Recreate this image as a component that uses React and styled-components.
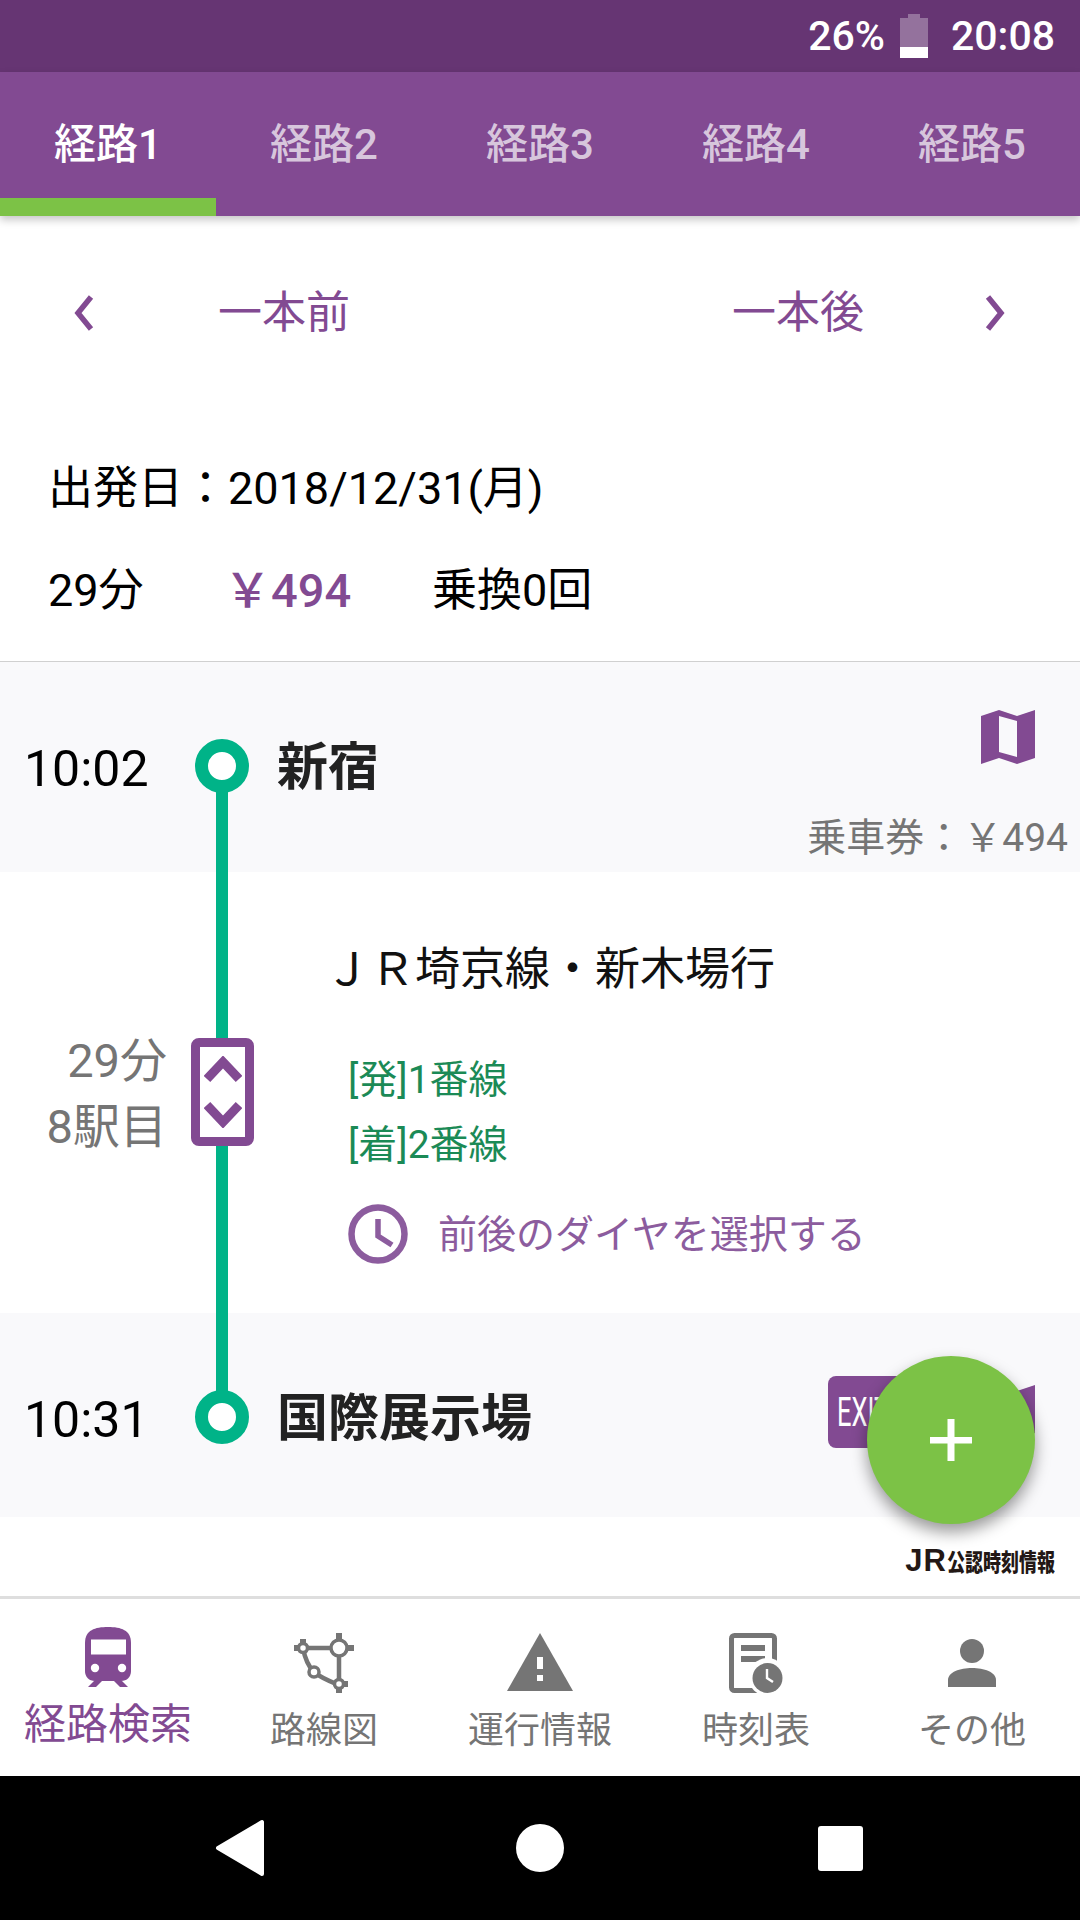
import React from 'react'
import styled, { createGlobalStyle } from 'styled-components'

const PURPLE = '#824a92'
const GREEN = '#7cc246'
const LINE = '#00b388'
const GREY = '#757575'

const GlobalStyle = createGlobalStyle`
  html, body {
    margin: 0;
    padding: 0;
    background: #fff;
  }
  body {
    font-family: Roboto, "Noto Sans CJK JP", sans-serif;
    font-size: 44px;
    color: #000;
  }
  * { box-sizing: border-box; }
`

const tabs = ['経路1', '経路2', '経路3', '経路4', '経路5']

function App() {
  return (
    <Screen>
      <GlobalStyle />
      <StatusBar>
        <StatusText>26%</StatusText>
        <Battery />
        <StatusText>20:08</StatusText>
      </StatusBar>

      <Tabs>
        {tabs.map((tab, index) => (
          <Tab key={tab} $active={index === 0}>{tab}</Tab>
        ))}
      </Tabs>

      <PagerRow>
        <PagerGroup>
          <Chevron viewBox="0 0 22 36">
            <path d="M19 2 L6 18 L19 34" />
          </Chevron>
          <PagerLabel>一本前</PagerLabel>
        </PagerGroup>
        <PagerGroup $right>
          <PagerLabel>一本後</PagerLabel>
          <Chevron viewBox="0 0 22 36">
            <path d="M3 2 L16 18 L3 34" />
          </Chevron>
        </PagerGroup>
      </PagerRow>

      <Summary>
        <SummaryLine>出発日：2018/12/31(月)</SummaryLine>
        <SummaryLine>
          <SummaryTime>29分</SummaryTime>
          <SummaryPrice>￥494</SummaryPrice>
          <span>乗換0回</span>
        </SummaryLine>
      </Summary>

      <Route>
        <RouteLine />

        <StationRow $height={210}>
          <StationMain>
            <StationTime>10:02</StationTime>
            <StationNode />
            <StationName>新宿</StationName>
          </StationMain>
          <StationSide>
            <MapIcon />
            <Fare>乗車券：￥494</Fare>
          </StationSide>
        </StationRow>

        <Segment>
          <Ride>
            <RideLine>29分</RideLine>
            <RideLine>8駅目</RideLine>
          </Ride>
          <ExpandBadge>
            <svg width="38" height="72" viewBox="0 0 38 72" fill="none" stroke={PURPLE} strokeWidth="9">
              <path d="M3 23 L19 6 L35 23" />
              <path d="M3 49 L19 66 L35 49" />
            </svg>
          </ExpandBadge>
          <SegmentBody>
            <LineTitle>ＪＲ埼京線・新木場行</LineTitle>
            <Platforms>
              <Platform>[発]1番線</Platform>
              <Platform>[着]2番線</Platform>
            </Platforms>
            <DiagramLink>
              <svg width="60" height="60" viewBox="0 0 60 60" fill="none" stroke="#8c5c9e" strokeWidth="6.5">
                <circle cx="30" cy="30" r="26.5" />
                <path d="M30 15 V32 L44 41" strokeWidth="5.5" />
              </svg>
              <span>前後のダイヤを選択する</span>
            </DiagramLink>
          </SegmentBody>
        </Segment>

        <StationRow $height={204}>
          <StationMain>
            <StationTime>10:31</StationTime>
            <StationNode />
            <StationName>国際展示場</StationName>
          </StationMain>
          <ExitGroup>
            <ExitButton><ExitText>EXIT</ExitText></ExitButton>
            <MapIcon />
          </ExitGroup>
        </StationRow>

        <Credit>
          <CreditJr>JR</CreditJr>
          <CreditText>公認時刻情報</CreditText>
        </Credit>
      </Route>

      <Fab>
        <svg width="42" height="42" viewBox="0 0 42 42" fill="#fff">
          <rect x="17.5" y="0" width="7" height="42" />
          <rect x="0" y="18" width="42" height="6.5" />
        </svg>
      </Fab>

      <BottomNav>
        <NavItem $active>
          <NavIcon>
            <svg width="46" height="60" viewBox="0 0 46 60" fill={PURPLE}>
              <path d="M0 16 C0 3 10 0 23 0 C36 0 46 3 46 16 V44 C46 50 42 54 36 54 H10 C4 54 0 50 0 44 Z" />
              <rect x="6" y="12.5" width="35" height="15" fill="#fff" />
              <circle cx="10" cy="41" r="4.2" fill="#fff" />
              <circle cx="37" cy="41" r="4.2" fill="#fff" />
              <polygon points="9,54 17,54 11,60 3,60" />
              <polygon points="29,54 37,54 43,60 35,60" />
            </svg>
          </NavIcon>
          <NavLabel $active>経路検索</NavLabel>
        </NavItem>
        <NavItem>
          <NavIcon>
            <svg width="60" height="60" viewBox="0 0 60 60" fill="none" stroke={GREY} strokeWidth="4.5">
              <path d="M9 15 H45 V52" />
              <path d="M9 15 C11 26 14 33 20 39 C27 45 35 48 45 52" />
              <path d="M0 15 H5 M9 6 V11 M45 0 V8 M53 15 H60 M45 52 V60 M49 51 H54" strokeWidth="6" />
              <circle cx="9" cy="15" r="4.5" fill="#fff" strokeWidth="3.5" />
              <circle cx="20" cy="39" r="5" fill="#fff" strokeWidth="3.5" />
              <circle cx="45" cy="15" r="8" fill="#fff" strokeWidth="3.5" />
              <circle cx="45" cy="51" r="4.5" fill="#fff" strokeWidth="3.5" />
            </svg>
          </NavIcon>
          <NavLabel>路線図</NavLabel>
        </NavItem>
        <NavItem>
          <NavIcon>
            <svg width="66" height="60" viewBox="0 0 66 60" fill={GREY}>
              <polygon points="33,0 66,58 0,58" />
              <rect x="30" y="24" width="6" height="12" fill="#fff" />
              <rect x="30" y="42" width="6" height="6" fill="#fff" />
            </svg>
          </NavIcon>
          <NavLabel>運行情報</NavLabel>
        </NavItem>
        <NavItem>
          <NavIcon>
            <svg width="54" height="60" viewBox="0 0 54 60" fill={GREY}>
              <rect x="2.5" y="2.5" width="43" height="55" rx="3" fill="#fff" stroke={GREY} strokeWidth="5" />
              <rect x="12" y="12" width="24" height="6" />
              <rect x="12" y="23" width="24" height="6" />
              <circle cx="38.5" cy="44" r="19" fill="#fff" />
              <circle cx="38.5" cy="45" r="15" />
              <path d="M38 36 V45 L44 49" fill="none" stroke="#fff" strokeWidth="2.4" />
            </svg>
          </NavIcon>
          <NavLabel>時刻表</NavLabel>
        </NavItem>
        <NavItem>
          <NavIcon>
            <svg width="48" height="60" viewBox="0 0 48 60" fill={GREY}>
              <circle cx="24" cy="18" r="12" />
              <path d="M0 54 V47 C0 39 12 35 24 35 C36 35 48 39 48 47 V54 Z" />
            </svg>
          </NavIcon>
          <NavLabel>その他</NavLabel>
        </NavItem>
      </BottomNav>

      <SystemBar>
        <svg width="50" height="58" viewBox="0 0 50 58" fill="#fff" stroke="#fff" strokeWidth="4" strokeLinejoin="round">
          <polygon points="3,29 47,3 47,55" />
        </svg>
        <HomeDot />
        <RecentSquare />
      </SystemBar>
    </Screen>
  )
}

function MapIcon() {
  return (
    <MapSvg viewBox="0 0 54 54">
      <path fillRule="evenodd" d="M0 6 L18 0 L36 6 L54 0 V48 L36 54 L18 48 L0 54 Z M18 6 V42 L36 47 V11 Z" />
    </MapSvg>
  )
}

export default App

const Screen = styled.div`
  position: relative;
  width: 1080px;
  height: 1920px;
  overflow: hidden;
  background: #fff;
`

const StatusBar = styled.div`
  height: 72px;
  background: #663573;
  display: flex;
  align-items: center;
  justify-content: flex-end;
  gap: 14px;
  padding-right: 25px;
`

const StatusText = styled.span`
  color: #fff;
  font-size: 41px;
  font-weight: 500;
  line-height: 72px;
  & + div + & {
    margin-left: 9px;
  }
`

const Battery = styled.div`
  position: relative;
  width: 28px;
  height: 40px;
  margin: 4px 0 0 1px;
  background: linear-gradient(to bottom, rgba(255, 255, 255, 0.3) 0 29px, #fff 29px);
  &::before {
    content: "";
    position: absolute;
    top: -4px;
    left: 8px;
    width: 12px;
    height: 4px;
    background: rgba(255, 255, 255, 0.3);
  }
`

const Tabs = styled.div`
  position: relative;
  z-index: 3;
  height: 144px;
  display: flex;
  background: ${PURPLE};
  box-shadow: 0 4px 8px rgba(0, 0, 0, 0.22);
`

const Tab = styled.div`
  position: relative;
  flex: 1;
  display: flex;
  align-items: center;
  justify-content: center;
  padding-bottom: 7px;
  font-size: 42px;
  font-weight: 500;
  color: ${props => props.$active ? '#fff' : 'rgba(255, 255, 255, 0.7)'};
  &::after {
    content: "";
    position: absolute;
    left: 0;
    right: 0;
    bottom: 0;
    height: 18px;
    background: ${props => props.$active ? GREEN : 'transparent'};
  }
`

const PagerRow = styled.div`
  height: 194px;
  display: flex;
  align-items: center;
  justify-content: space-between;
`

const PagerGroup = styled.div`
  display: flex;
  align-items: center;
  gap: ${props => props.$right ? '121px' : '124px'};
  padding: ${props => props.$right ? '0 73px 0 0' : '0 0 0 72px'};
`

const PagerLabel = styled.span`
  color: ${PURPLE};
  font-size: 44px;
  line-height: 60px;
`

const Chevron = styled.svg`
  width: 22px;
  height: 36px;
  fill: none;
  stroke: ${PURPLE};
  stroke-width: 5.5;
`

const Summary = styled.div`
  padding: 35px 0 0 48px;
  border-bottom: 1px solid #d0d0d0;
  height: 252px;
`

const SummaryLine = styled.div`
  display: flex;
  align-items: center;
  height: 78px;
  font-size: 45px;
  & + & {
    margin-top: 24px;
  }
`

const SummaryTime = styled.span`
  width: 176px;
`

const SummaryPrice = styled.span`
  width: 208px;
  color: ${PURPLE};
  font-size: 47px;
  font-weight: 500;
`

const Route = styled.div`
  position: relative;
`

const RouteLine = styled.div`
  position: absolute;
  z-index: 1;
  left: 216px;
  top: 104px;
  width: 12px;
  height: 651px;
  background: ${LINE};
`

const StationRow = styled.div`
  height: ${props => props.$height}px;
  background: #f9f9fb;
  display: flex;
  justify-content: space-between;
  align-items: flex-start;
`

const StationMain = styled.div`
  display: flex;
  align-items: center;
  height: 60px;
  margin-top: 74px;
`

const StationTime = styled.div`
  width: 195px;
  padding-left: 24px;
  margin-top: 5px;
  font-size: 50px;
  line-height: 60px;
`

const StationNode = styled.div`
  position: relative;
  z-index: 2;
  width: 54px;
  height: 54px;
  border-radius: 50%;
  border: 13px solid ${LINE};
  background: #fff;
`

const StationName = styled.div`
  margin: 4px 0 0 28px;
  font-size: 51px;
  font-weight: 700;
  color: #222;
  line-height: 60px;
`

const StationSide = styled.div`
  display: flex;
  flex-direction: column;
  align-items: flex-end;
  padding: 48px 12px 0 0;
`

const MapSvg = styled.svg`
  display: block;
  width: 54px;
  height: 54px;
  fill: ${PURPLE};
  ${StationSide} & {
    margin-right: 33px;
  }
`

const Fare = styled.div`
  margin-top: 50px;
  font-size: 39px;
  line-height: 48px;
  color: ${GREY};
`

const Segment = styled.div`
  height: 441px;
  display: flex;
  align-items: flex-start;
`

const Ride = styled.div`
  width: 167px;
  padding-top: 156px;
  text-align: right;
  color: ${GREY};
`

const RideLine = styled.div`
  font-size: 47px;
  line-height: 66px;
`

const ExpandBadge = styled.div`
  position: relative;
  z-index: 2;
  width: 63px;
  height: 108px;
  margin: 166px 0 0 24px;
  display: flex;
  align-items: center;
  justify-content: center;
  background: #fff;
  border: 9px solid ${PURPLE};
  border-radius: 8px;
`

const SegmentBody = styled.div`
  margin-left: 71px;
  padding-top: 68px;
`

const LineTitle = styled.div`
  font-size: 45px;
  line-height: 60px;
  color: #111;
`

const Platforms = styled.div`
  margin: 48px 0 0 23px;
`

const Platform = styled.div`
  font-size: 39px;
  line-height: 65px;
  color: #1b8a56;
`

const DiagramLink = styled.div`
  display: flex;
  align-items: center;
  gap: 30px;
  margin: 25px 0 0 23px;
  font-size: 39px;
  line-height: 60px;
  color: #8c5c9e;
  span {
    margin-top: 2px;
  }
`

const ExitGroup = styled.div`
  display: flex;
  align-items: flex-start;
  gap: 25px;
  padding: 63px 45px 0 0;
  ${MapSvg} {
    margin-top: 9px;
  }
`

const ExitButton = styled.div`
  width: 128px;
  height: 72px;
  padding-left: 9px;
  display: flex;
  align-items: center;
  background: ${PURPLE};
  border-radius: 8px;
`

const ExitText = styled.span`
  display: inline-block;
  color: #fff;
  font-size: 41px;
  transform: scaleX(0.62);
  transform-origin: left center;
`

const Credit = styled.div`
  height: 79px;
  display: flex;
  align-items: center;
  justify-content: flex-end;
  padding: 8px 25px 0 0;
  color: #231815;
`

const CreditJr = styled.span`
  font-family: "Liberation Sans", sans-serif;
  font-size: 31px;
  font-weight: 700;
  letter-spacing: 1px;
`

const CreditText = styled.span`
  display: inline-block;
  font-size: 18px;
  font-weight: 900;
  transform: scaleY(1.3);
`

const Fab = styled.div`
  position: absolute;
  z-index: 4;
  left: 867px;
  top: 1356px;
  width: 168px;
  height: 168px;
  border-radius: 50%;
  display: flex;
  align-items: center;
  justify-content: center;
  background: ${GREEN};
  box-shadow: 0 8px 16px rgba(0, 0, 0, 0.4);
`

const BottomNav = styled.div`
  height: 180px;
  display: flex;
  background: #fff;
  border-top: 3px solid #dedede;
`

const NavItem = styled.div`
  position: relative;
  width: 216px;
  display: flex;
  flex-direction: column;
  align-items: center;
  padding-top: ${props => props.$active ? '28px' : '34px'};
`

const NavIcon = styled.div`
  height: 60px;
  display: flex;
  justify-content: center;
  svg { display: block; }
`

const NavLabel = styled.div`
  margin-top: 13px;
  font-size: ${props => props.$active ? '42px' : '36px'};
  line-height: 50px;
  color: ${props => props.$active ? PURPLE : GREY};
`

const SystemBar = styled.div`
  height: 144px;
  background: #000;
  display: grid;
  grid-template-columns: repeat(3, 300px);
  justify-content: center;
  justify-items: center;
  align-items: center;
`

const HomeDot = styled.div`
  width: 48px;
  height: 48px;
  border-radius: 50%;
  background: #fff;
`

const RecentSquare = styled.div`
  width: 45px;
  height: 45px;
  border-radius: 3px;
  background: #fff;
`
